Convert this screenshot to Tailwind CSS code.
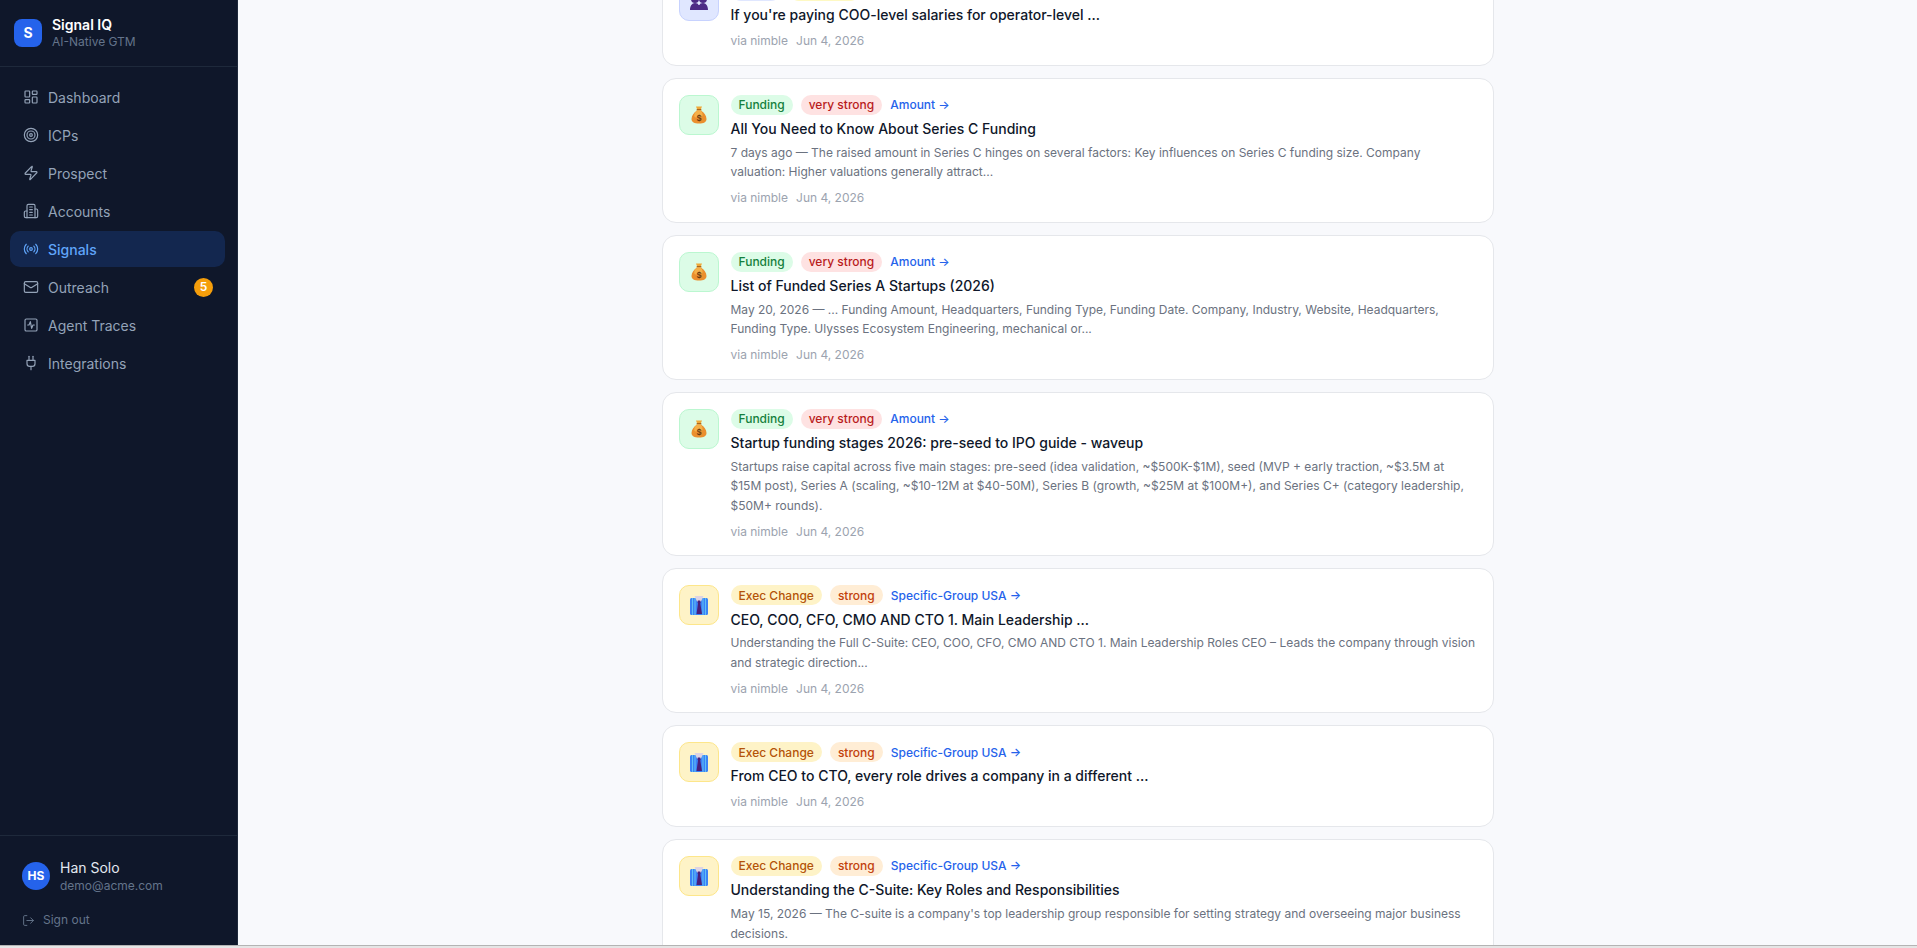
<!DOCTYPE html>
<html lang="en">
  <head>
    <meta charset="UTF-8" />
    <meta name="viewport" content="width=device-width, initial-scale=1.0" />
    <title>Signals - Signal IQ</title>
    <script src="https://cdn.jsdelivr.net/npm/@tailwindcss/browser@4"></script>
  </head>
  <body class="h-[948px] overflow-hidden bg-[#e5e5e5] font-['Inter',sans-serif]">
    <div class="flex h-[945px] overflow-hidden">
      <!-- Sidebar -->
      <aside class="flex h-full w-[238px] shrink-0 flex-col border-r border-[#1e293b] bg-[#0f172a]">
        <div class="flex h-[67px] items-center gap-[10px] border-b border-[#1e293b] pl-[14px]">
          <div class="flex h-7 w-7 items-center justify-center rounded-lg bg-[#2563eb] text-sm font-bold text-white">S</div>
          <div>
            <div class="text-sm leading-[18px] font-semibold text-white">Signal IQ</div>
            <div class="text-xs leading-[16px] text-[#64748b]">AI-Native GTM</div>
          </div>
        </div>
        <nav class="flex flex-col gap-[2px] pt-3 pr-3 pl-[10px]">
          <a class="flex h-9 items-center gap-[9px] rounded-[10px] px-[13px] pt-[2px] text-sm text-[#94a3b8]">
            <svg class="-mt-[2px] h-4 w-4 shrink-0" viewBox="0 0 24 24" fill="none" stroke="currentColor" stroke-width="1.75" stroke-linecap="round" stroke-linejoin="round"><rect x="3" y="3" width="7" height="9" rx="1"/><rect x="14" y="3" width="7" height="5" rx="1"/><rect x="14" y="12" width="7" height="9" rx="1"/><rect x="3" y="16" width="7" height="5" rx="1"/></svg>
            Dashboard
          </a>
          <a class="flex h-9 items-center gap-[9px] rounded-[10px] px-[13px] pt-[2px] text-sm text-[#94a3b8]">
            <svg class="-mt-[2px] h-4 w-4 shrink-0" viewBox="0 0 24 24" fill="none" stroke="currentColor" stroke-width="1.75" stroke-linecap="round" stroke-linejoin="round"><circle cx="12" cy="12" r="10"/><circle cx="12" cy="12" r="6"/><circle cx="12" cy="12" r="2"/></svg>
            ICPs
          </a>
          <a class="flex h-9 items-center gap-[9px] rounded-[10px] px-[13px] pt-[2px] text-sm text-[#94a3b8]">
            <svg class="-mt-[2px] h-4 w-4 shrink-0" viewBox="0 0 24 24" fill="none" stroke="currentColor" stroke-width="1.75" stroke-linecap="round" stroke-linejoin="round"><path d="M4 14a1 1 0 0 1-.78-1.63l9.9-10.2a.5.5 0 0 1 .86.46l-1.92 6.02A1 1 0 0 0 13 10h7a1 1 0 0 1 .78 1.63l-9.9 10.2a.5.5 0 0 1-.86-.46l1.92-6.02A1 1 0 0 0 11 14z"/></svg>
            Prospect
          </a>
          <a class="flex h-9 items-center gap-[9px] rounded-[10px] px-[13px] pt-[2px] text-sm text-[#94a3b8]">
            <svg class="-mt-[2px] h-4 w-4 shrink-0" viewBox="0 0 24 24" fill="none" stroke="currentColor" stroke-width="1.75" stroke-linecap="round" stroke-linejoin="round"><path d="M6 22V4a2 2 0 0 1 2-2h8a2 2 0 0 1 2 2v18Z"/><path d="M6 12H4a2 2 0 0 0-2 2v6a2 2 0 0 0 2 2h2"/><path d="M18 9h2a2 2 0 0 1 2 2v9a2 2 0 0 1-2 2h-2"/><path d="M10 6h4"/><path d="M10 10h4"/><path d="M10 14h4"/><path d="M10 18h4"/></svg>
            Accounts
          </a>
          <a class="flex h-9 items-center gap-[9px] rounded-[10px] bg-[#13274f] px-[13px] pt-[2px] text-sm font-medium text-[#60a5fa]">
            <svg class="-mt-[2px] h-4 w-4 shrink-0" viewBox="0 0 24 24" fill="none" stroke="currentColor" stroke-width="1.75" stroke-linecap="round" stroke-linejoin="round"><path d="M4.9 19.1C1 15.2 1 8.8 4.9 4.9"/><path d="M7.8 16.2c-2.3-2.3-2.3-6.1 0-8.5"/><circle cx="12" cy="12" r="2"/><path d="M16.2 7.8c2.3 2.3 2.3 6.1 0 8.5"/><path d="M19.1 4.9C23 8.8 23 15.1 19.1 19"/></svg>
            Signals
          </a>
          <a class="flex h-9 items-center gap-[9px] rounded-[10px] px-[13px] pt-[2px] text-sm text-[#94a3b8]">
            <svg class="-mt-[2px] h-4 w-4 shrink-0" viewBox="0 0 24 24" fill="none" stroke="currentColor" stroke-width="1.75" stroke-linecap="round" stroke-linejoin="round"><rect x="2" y="4" width="20" height="16" rx="2"/><path d="m22 7-8.97 5.7a1.94 1.94 0 0 1-2.06 0L2 7"/></svg>
            Outreach
            <span class="-mt-[2px] -mr-[1px] ml-auto flex h-[19px] w-[19px] items-center justify-center rounded-full bg-[#f59e0b] text-xs font-semibold text-white">5</span>
          </a>
          <a class="flex h-9 items-center gap-[9px] rounded-[10px] px-[13px] pt-[2px] text-sm text-[#94a3b8]">
            <svg class="-mt-[2px] h-4 w-4 shrink-0" viewBox="0 0 24 24" fill="none" stroke="currentColor" stroke-width="1.75" stroke-linecap="round" stroke-linejoin="round"><rect x="3" y="3" width="18" height="18" rx="2"/><path d="M17 12h-2l-2 5-2-10-2 5H7"/></svg>
            Agent Traces
          </a>
          <a class="flex h-9 items-center gap-[9px] rounded-[10px] px-[13px] pt-[2px] text-sm text-[#94a3b8]">
            <svg class="-mt-[2px] h-4 w-4 shrink-0" viewBox="0 0 24 24" fill="none" stroke="currentColor" stroke-width="1.75" stroke-linecap="round" stroke-linejoin="round"><path d="M12 22v-5"/><path d="M9 8V2"/><path d="M15 8V2"/><path d="M18 8v5a4 4 0 0 1-4 4h-4a4 4 0 0 1-4-4V8Z"/></svg>
            Integrations
          </a>
        </nav>
        <div class="mt-auto border-t border-[#1e293b] px-[22px] pt-[22px] pb-[17px]">
          <div class="flex items-center gap-[10px]">
            <div class="flex h-7 w-7 items-center justify-center rounded-full bg-[#2563eb] text-xs font-bold text-white">HS</div>
            <div>
              <div class="text-sm leading-5 text-[#e2e8f0]">Han Solo</div>
              <div class="text-xs leading-4 text-[#64748b]">demo@acme.com</div>
            </div>
          </div>
          <div class="mt-[18px] flex items-center gap-2 text-xs leading-4 text-[#64748b]">
            <svg class="h-[13px] w-[13px]" viewBox="0 0 24 24" fill="none" stroke="currentColor" stroke-width="1.75" stroke-linecap="round" stroke-linejoin="round"><path d="M9 21H5a2 2 0 0 1-2-2V5a2 2 0 0 1 2-2h4"/><path d="m16 17 5-5-5-5"/><path d="M21 12H9"/></svg>
            Sign out
          </div>
        </div>
      </aside>

      <!-- Signals feed -->
      <main class="min-w-0 flex-1 overflow-hidden bg-[#f8f9fc]">
        <div class="mx-auto -mt-[36.02px] flex w-[832px] flex-col gap-3">
          <article class="flex gap-3 rounded-[14px] border border-[#e5e7eb] bg-white p-4">
            <div class="flex h-10 w-10 shrink-0 items-center justify-center rounded-[10px] border border-[#c7d2fe] bg-[#e0e7ff]">
              <svg class="h-5 w-5" viewBox="0 0 20 20"><circle cx="6" cy="8" r="4" fill="#4c2a85"/><circle cx="14" cy="8" r="4" fill="#4c2a85"/><path d="M1 19c0-4 2-7 5-7 1.800 0 3.200.8 4 2 .8-1.200 2.200-2 4-2 3 0 5 3 5 7z" fill="#4c2a85"/><path d="M10 11v3" stroke="#e0e7ff" stroke-width="1"/></svg>
            </div>
            <div class="min-w-0 flex-1">
              <div class="flex items-center gap-2 text-xs font-medium">
                <span class="rounded-full bg-[#e0e7ff] px-2 py-[2px] leading-4 text-[#4338ca]">Hiring</span>
                <span class="rounded-full bg-[#fef9c3] px-2 py-[2px] leading-4 text-[#a16207]">moderate</span>
              </div>
              <h3 class="mt-1 text-sm font-medium text-[#0f172a]">If you're paying COO-level salaries for operator-level ...</h3>
              <div class="mt-2 flex gap-2 text-xs leading-4 text-[#9ca3af]"><span>via nimble</span><span>Jun 4, 2026</span></div>
            </div>
          </article>

          <article class="flex gap-3 rounded-[14px] border border-[#e5e7eb] bg-white p-4">
            <div class="flex h-10 w-10 shrink-0 items-center justify-center rounded-[10px] border border-[#bbf7d0] bg-[#dcfce7]">
              <svg class="h-[20px] w-[20px]" viewBox="0 0 20 20"><path d="M7 1.500h6l-1.200 3H8.200z" fill="#f0a93a"/><rect x="7.700" y="4" width="4.600" height="1.500" fill="#a9651c"/><path d="M8 5.500C5 7.500 2.500 10.500 2.500 14c0 3.200 2.800 4.500 7.500 4.500s7.500-1.300 7.500-4.500c0-3.500-2.500-6.500-5.500-8.500z" fill="#ea8f2f"/><path d="M8 5.500C6 7 4.500 9.500 5.500 12c2 1 5 .5 8-1 .3-2-.5-4-1.500-5.500z" fill="#f5b049"/><text x="10" y="15.500" font-size="8" font-weight="600" text-anchor="middle" fill="#6b3a10">$</text></svg>
            </div>
            <div class="min-w-0 flex-1">
              <div class="flex items-center gap-2 text-xs font-medium">
                <span class="rounded-full bg-[#dcfce7] px-2 py-[2px] leading-4 text-[#15803d]">Funding</span>
                <span class="rounded-full bg-[#fee2e2] px-2 py-[2px] leading-4 text-[#b91c1c]">very strong</span>
                <span class="leading-4 text-[#2563eb]">Amount →</span>
              </div>
              <h3 class="mt-1 text-sm font-medium text-[#0f172a]">All You Need to Know About Series C Funding</h3>
              <p class="mt-1 text-xs leading-[19.5px] text-[#6b7280]">7 days ago — The raised amount in Series C hinges on several factors: Key influences on Series C funding size. Company valuation: Higher valuations generally attract...</p>
              <div class="mt-2 flex gap-2 text-xs leading-4 text-[#9ca3af]"><span>via nimble</span><span>Jun 4, 2026</span></div>
            </div>
          </article>

          <article class="flex gap-3 rounded-[14px] border border-[#e5e7eb] bg-white p-4">
            <div class="flex h-10 w-10 shrink-0 items-center justify-center rounded-[10px] border border-[#bbf7d0] bg-[#dcfce7]">
              <svg class="h-[20px] w-[20px]" viewBox="0 0 20 20"><path d="M7 1.500h6l-1.200 3H8.200z" fill="#f0a93a"/><rect x="7.700" y="4" width="4.600" height="1.500" fill="#a9651c"/><path d="M8 5.500C5 7.500 2.500 10.500 2.500 14c0 3.200 2.800 4.500 7.500 4.500s7.500-1.300 7.500-4.500c0-3.500-2.500-6.500-5.500-8.500z" fill="#ea8f2f"/><path d="M8 5.500C6 7 4.500 9.500 5.500 12c2 1 5 .5 8-1 .3-2-.5-4-1.500-5.500z" fill="#f5b049"/><text x="10" y="15.500" font-size="8" font-weight="600" text-anchor="middle" fill="#6b3a10">$</text></svg>
            </div>
            <div class="min-w-0 flex-1">
              <div class="flex items-center gap-2 text-xs font-medium">
                <span class="rounded-full bg-[#dcfce7] px-2 py-[2px] leading-4 text-[#15803d]">Funding</span>
                <span class="rounded-full bg-[#fee2e2] px-2 py-[2px] leading-4 text-[#b91c1c]">very strong</span>
                <span class="leading-4 text-[#2563eb]">Amount →</span>
              </div>
              <h3 class="mt-1 text-sm font-medium text-[#0f172a]">List of Funded Series A Startups (2026)</h3>
              <p class="mt-1 text-xs leading-[19.5px] text-[#6b7280]">May 20, 2026 — ... Funding Amount, Headquarters, Funding Type, Funding Date. Company, Industry, Website, Headquarters, Funding Type. Ulysses Ecosystem Engineering, mechanical or...</p>
              <div class="mt-2 flex gap-2 text-xs leading-4 text-[#9ca3af]"><span>via nimble</span><span>Jun 4, 2026</span></div>
            </div>
          </article>

          <article class="flex gap-3 rounded-[14px] border border-[#e5e7eb] bg-white px-4 pt-4 pb-[15.98px]">
            <div class="flex h-10 w-10 shrink-0 items-center justify-center rounded-[10px] border border-[#bbf7d0] bg-[#dcfce7]">
              <svg class="h-[20px] w-[20px]" viewBox="0 0 20 20"><path d="M7 1.500h6l-1.200 3H8.200z" fill="#f0a93a"/><rect x="7.700" y="4" width="4.600" height="1.500" fill="#a9651c"/><path d="M8 5.500C5 7.500 2.500 10.500 2.500 14c0 3.200 2.800 4.500 7.500 4.500s7.500-1.300 7.500-4.500c0-3.500-2.500-6.500-5.500-8.500z" fill="#ea8f2f"/><path d="M8 5.500C6 7 4.500 9.500 5.500 12c2 1 5 .5 8-1 .3-2-.5-4-1.500-5.500z" fill="#f5b049"/><text x="10" y="15.500" font-size="8" font-weight="600" text-anchor="middle" fill="#6b3a10">$</text></svg>
            </div>
            <div class="min-w-0 flex-1">
              <div class="flex items-center gap-2 text-xs font-medium">
                <span class="rounded-full bg-[#dcfce7] px-2 py-[2px] leading-4 text-[#15803d]">Funding</span>
                <span class="rounded-full bg-[#fee2e2] px-2 py-[2px] leading-4 text-[#b91c1c]">very strong</span>
                <span class="leading-4 text-[#2563eb]">Amount →</span>
              </div>
              <h3 class="mt-1 text-sm font-medium text-[#0f172a]">Startup funding stages 2026: pre-seed to IPO guide - waveup</h3>
              <p class="mt-1 text-xs leading-[19.5px] text-[#6b7280]">Startups raise capital across five main stages: pre-seed (idea validation, ~$500K-$1M), seed (MVP + early traction, ~$3.5M at $15M post), Series A (scaling, ~$10-12M at $40-50M), Series B (growth, ~$25M at $100M+), and Series C+ (category leadership, $50M+ rounds).</p>
              <div class="mt-[8.04px] flex gap-2 text-xs leading-4 text-[#9ca3af]"><span>via nimble</span><span>Jun 4, 2026</span></div>
            </div>
          </article>

          <article class="flex gap-3 rounded-[14px] border border-[#e5e7eb] bg-white px-4 pt-4 pb-[15.98px]">
            <div class="flex h-10 w-10 shrink-0 items-center justify-center rounded-[10px] border border-[#fde68a] bg-[#fef3c7]">
              <svg class="h-[20px] w-[20px]" viewBox="0 0 20 20"><rect x="1" y="3" width="18" height="17" rx="1.500" fill="#3b82f6"/><path d="M3.500 3v17M6 3v17M14 3v17M16.500 3v17" stroke="#60c0f5" stroke-width="1"/><path d="M5.500 1h9L12 6.500H8z" fill="#ddd3e4"/><path d="M8.800 5.500h2.400l.5 2-.4 1 1.700 10.500h-5.500L9 8.500l-.4-1z" fill="#4a1f7a"/></svg>
            </div>
            <div class="min-w-0 flex-1">
              <div class="flex items-center gap-2 text-xs font-medium">
                <span class="rounded-full bg-[#fef3c7] px-2 pt-[2.04px] pb-[1.96px] leading-4 text-[#b45309]">Exec Change</span>
                <span class="rounded-full bg-[#ffedd5] px-2 pt-[2.04px] pb-[1.96px] leading-4 text-[#c2410c]">strong</span>
                <span class="pt-[2.04px] pb-[1.96px] leading-4 text-[#2563eb]">Specific-Group USA →</span>
              </div>
              <h3 class="mt-[4.04px] text-sm font-medium text-[#0f172a]">CEO, COO, CFO, CMO AND CTO 1. Main Leadership ...</h3>
              <p class="mt-[3.98px] text-xs leading-[19.5px] text-[#6b7280]">Understanding the Full C-Suite: CEO, COO, CFO, CMO AND CTO 1. Main Leadership Roles CEO – Leads the company through vision and strategic direction...</p>
              <div class="mt-[8.04px] flex gap-2 text-xs leading-4 text-[#9ca3af]"><span>via nimble</span><span>Jun 4, 2026</span></div>
            </div>
          </article>

          <article class="flex gap-3 rounded-[14px] border border-[#e5e7eb] bg-white px-4 pt-4 pb-[15.98px]">
            <div class="flex h-10 w-10 shrink-0 items-center justify-center rounded-[10px] border border-[#fde68a] bg-[#fef3c7]">
              <svg class="h-[20px] w-[20px]" viewBox="0 0 20 20"><rect x="1" y="3" width="18" height="17" rx="1.500" fill="#3b82f6"/><path d="M3.500 3v17M6 3v17M14 3v17M16.500 3v17" stroke="#60c0f5" stroke-width="1"/><path d="M5.500 1h9L12 6.500H8z" fill="#ddd3e4"/><path d="M8.800 5.500h2.400l.5 2-.4 1 1.700 10.500h-5.500L9 8.500l-.4-1z" fill="#4a1f7a"/></svg>
            </div>
            <div class="min-w-0 flex-1">
              <div class="flex items-center gap-2 text-xs font-medium">
                <span class="rounded-full bg-[#fef3c7] px-2 pt-[2.04px] pb-[1.96px] leading-4 text-[#b45309]">Exec Change</span>
                <span class="rounded-full bg-[#ffedd5] px-2 pt-[2.04px] pb-[1.96px] leading-4 text-[#c2410c]">strong</span>
                <span class="pt-[2.04px] pb-[1.96px] leading-4 text-[#2563eb]">Specific-Group USA →</span>
              </div>
              <h3 class="mt-[4.04px] text-sm font-medium text-[#0f172a]">From CEO to CTO, every role drives a company in a different ...</h3>
              <div class="mt-2 flex gap-2 text-xs leading-4 text-[#9ca3af]"><span>via nimble</span><span>Jun 4, 2026</span></div>
            </div>
          </article>

          <article class="flex gap-3 rounded-[14px] border border-[#e5e7eb] bg-white px-4 pt-4 pb-[15.98px]">
            <div class="flex h-10 w-10 shrink-0 items-center justify-center rounded-[10px] border border-[#fde68a] bg-[#fef3c7]">
              <svg class="h-[20px] w-[20px]" viewBox="0 0 20 20"><rect x="1" y="3" width="18" height="17" rx="1.500" fill="#3b82f6"/><path d="M3.500 3v17M6 3v17M14 3v17M16.500 3v17" stroke="#60c0f5" stroke-width="1"/><path d="M5.500 1h9L12 6.500H8z" fill="#ddd3e4"/><path d="M8.800 5.500h2.400l.5 2-.4 1 1.700 10.500h-5.500L9 8.500l-.4-1z" fill="#4a1f7a"/></svg>
            </div>
            <div class="min-w-0 flex-1">
              <div class="flex items-center gap-2 text-xs font-medium">
                <span class="rounded-full bg-[#fef3c7] px-2 pt-[2.04px] pb-[1.96px] leading-4 text-[#b45309]">Exec Change</span>
                <span class="rounded-full bg-[#ffedd5] px-2 pt-[2.04px] pb-[1.96px] leading-4 text-[#c2410c]">strong</span>
                <span class="pt-[2.04px] pb-[1.96px] leading-4 text-[#2563eb]">Specific-Group USA →</span>
              </div>
              <h3 class="mt-[4.04px] text-sm font-medium text-[#0f172a]">Understanding the C-Suite: Key Roles and Responsibilities</h3>
              <p class="mt-[3.98px] text-xs leading-[19.5px] text-[#6b7280]">May 15, 2026 — The C-suite is a company's top leadership group responsible for setting strategy and overseeing major business decisions.</p>
              <div class="mt-[8.04px] flex gap-2 text-xs leading-4 text-[#9ca3af]"><span>via nimble</span><span>Jun 4, 2026</span></div>
            </div>
          </article>
        </div>
      </main>
    </div>
    <div class="h-px bg-[#b4b4b4]"></div>
  </body>
</html>
